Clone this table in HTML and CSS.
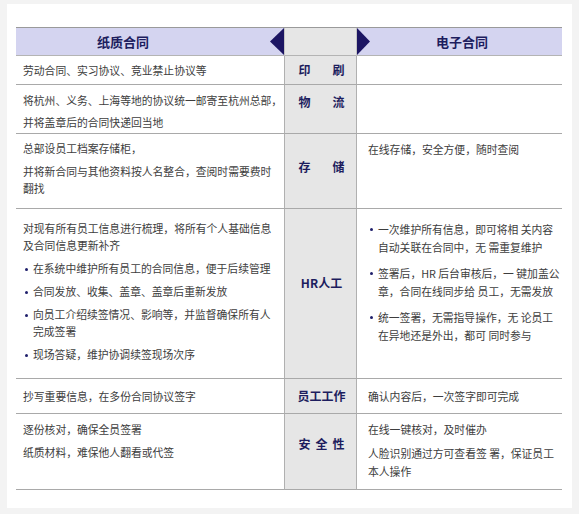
FILE: index.html
```html
<!DOCTYPE html>
<html lang="zh-CN">
<head>
<meta charset="utf-8">
<title>纸质合同 vs 电子合同</title>
<link rel="stylesheet" href="styles.css">
</head>
<body>
<div class="card">
  <div class="table">
    <div class="hd hd-left">
      <span class="hd-text">纸质合同</span>
      <svg class="tri" width="14" height="27" viewBox="0 0 14 27"><polygon points="14,0 14,27 0,13.5"/></svg>
    </div>
    <div class="hd hd-mid"></div>
    <div class="hd hd-right">
      <svg class="tri" width="13" height="27" viewBox="0 0 13 27"><polygon points="0,0 13,13.5 0,27"/></svg>
      <span class="hd-text">电子合同</span>
    </div>

    <div class="cell left vc"><p>劳动合同、实习协议、竞业禁止协议等</p></div>
    <div class="cell mid"><div class="label spread"><span>印</span><span>刷</span></div></div>
    <div class="cell right"></div>

    <div class="cell left pt7">
      <p class="tight">将杭州、义务、上海等地的协议统一邮寄至杭州总部，</p>
      <p>并将盖章后的合同快递回当地</p>
    </div>
    <div class="cell mid lift15"><div class="label spread"><span>物</span><span>流</span></div></div>
    <div class="cell right"></div>

    <div class="cell left pt6">
      <p>总部设员工档案存储柜，</p>
      <p>并将新合同与其他资料按人名整合，查阅时需要费时<br>翻找</p>
    </div>
    <div class="cell mid lift8"><div class="label spread"><span>存</span><span>储</span></div></div>
    <div class="cell right pt6"><p>在线存储，安全方便，随时查阅</p></div>

    <div class="cell left pt11">
      <p>对现有所有员工信息进行梳理，将所有个人基础信息<br>及合同信息更新补齐</p>
      <div class="item"><span class="dot"></span><p>在系统中维护所有员工的合同信息，便于后续管理</p></div>
      <div class="item"><span class="dot"></span><p>合同发放、收集、盖章、盖章后重新发放</p></div>
      <div class="item"><span class="dot"></span><p>向员工介绍续签情况、影响等，并监督确保所有人<br>完成签署</p></div>
      <div class="item"><span class="dot"></span><p>现场答疑，维护协调续签现场次序</p></div>
    </div>
    <div class="cell mid lift21"><div class="label">HR人工</div></div>
    <div class="cell right pt11">
      <div class="item"><span class="dot"></span><p>一次维护所有信息，即可将相 关内容<br>自动关联在合同中，无 需重复维护</p></div>
      <div class="item"><span class="dot"></span><p>签署后，HR 后台审核后，一 键加盖公<br>章，合同在线同步给 员工，无需发放</p></div>
      <div class="item"><span class="dot"></span><p>统一签署，无需指导操作，无 论员工<br>在异地还是外出，都可 同时参与</p></div>
    </div>

    <div class="cell left vc"><p>抄写重要信息，在多份合同协议签字</p></div>
    <div class="cell mid"><div class="label">员工工作</div></div>
    <div class="cell right vc"><p>确认内容后，一次签字即可完成</p></div>

    <div class="cell left pt7">
      <p>逐份核对，确保全员签署</p>
      <p>纸质材料，难保他人翻看或代签</p>
    </div>
    <div class="cell mid lift15"><div class="label spread"><span>安</span><span>全</span><span>性</span></div></div>
    <div class="cell right pt6">
      <p>在线一键核对，及时催办</p>
      <p>人脸识别通过方可查看签 署，保证员工<br>本人操作</p>
    </div>
  </div>
</div>
</body>
</html>
```

FILE: styles.css
```css
html, body {
  margin: 0;
}
body {
  background: #f3f3f3;
  padding: 4px 7px 6px;
  font-family: "Noto Sans CJK SC", "Noto Sans", sans-serif;
  color: #3d3d3d;
}
.card {
  background: #ffffff;
  width: 565px;
  box-sizing: border-box;
  padding: 23px 10px 18px 9px;
}
.table {
  display: grid;
  grid-template-columns: 268px 73px 205px;
  grid-template-rows: 28px 29px 49px 75px 170px 35px 76px;
  border-top: 1px solid #9a9a9a;
}
.hd {
  box-sizing: border-box;
  border-bottom: 1px solid #b4b4b4;
  display: flex;
  align-items: stretch;
}
.hd-left, .hd-right {
  background: #d4d4f0;
}
.hd-mid {
  background: #e6e6e6;
  border-left: 1px solid #c4c4c4;
  border-right: 1px solid #c4c4c4;
}
.hd-text {
  flex: 1;
  display: flex;
  align-items: center;
  justify-content: center;
  font-size: 13px;
  font-weight: 700;
  color: #1d1d5e;
}
.hd-left .hd-text {
  padding-right: 40px;
}
.hd-right .hd-text {
  padding-right: 8px;
}
.tri {
  display: block;
  flex: none;
  fill: #1c1563;
}
.cell {
  box-sizing: border-box;
  border-bottom: 1px solid #a9a9a9;
  display: flex;
  flex-direction: column;
  font-size: 10.8px;
  line-height: 17px;
}
.cell p {
  margin: 0 0 6px;
  white-space: nowrap;
}
.cell p:last-child {
  margin-bottom: 0;
}
.cell p.tight {
  margin-bottom: 5px;
}
.left {
  padding: 0 2px 0 7px;
}
.right {
  padding: 0 4px 0 11px;
  line-height: 18px;
}
.vc {
  justify-content: center;
}
.pt6 { padding-top: 6px; }
.pt7 { padding-top: 7px; }
.pt11 { padding-top: 11px; }
.item {
  display: flex;
  align-items: flex-start;
  margin-bottom: 6px;
}
.right .item {
  margin-bottom: 8px;
}
.item:last-child,
.right .item:last-child {
  margin-bottom: 0;
}
.item p {
  margin: 0;
}
.dot {
  flex: none;
  width: 3px;
  height: 3px;
  border-radius: 50%;
  background: #1f1f6b;
  margin: 7.5px 5px 0 2px;
}
.right .dot {
  margin-top: 8px;
}
.mid {
  background: #e6e6e6;
  border-left: 1px solid #b0b0b0;
  border-right: 1px solid #b0b0b0;
  align-items: center;
  justify-content: center;
  padding-left: 2px;
}
.lift8 { padding-bottom: 8px; }
.lift15 { padding-bottom: 15px; }
.lift21 { padding-bottom: 21px; }
.label {
  font-size: 12px;
  font-weight: 700;
  color: #1d1d5e;
  line-height: 16px;
}
.spread {
  display: flex;
  justify-content: space-between;
  width: 46px;
}
```
